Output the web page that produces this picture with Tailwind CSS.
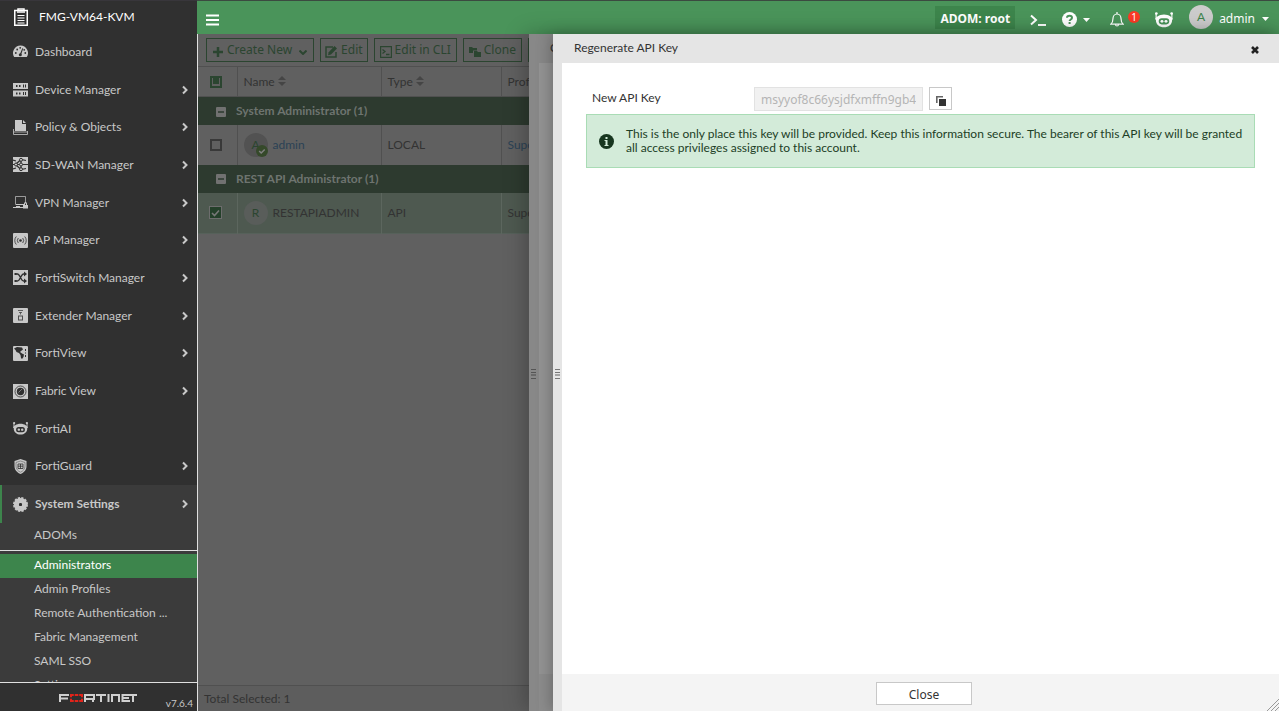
<!DOCTYPE html>
<html lang="en">
<head>
  <meta charset="UTF-8">
  <meta name="viewport" content="width=device-width, initial-scale=1.0">
  <title>FMG-VM64-KVM</title>
  <script src="https://cdn.jsdelivr.net/npm/@tailwindcss/browser@4"></script>
</head>
<body class="h-screen overflow-hidden flex font-['Lato',sans-serif] text-[12px] leading-4 bg-[#606060]">

  <!-- shared icons -->
  <svg class="hidden">
    <symbol id="chevron" viewBox="0 0 6 10"><path d="M1 1.500 4.500 5 1 8.500" fill="none" stroke="currentColor" stroke-width="2"/></symbol>
    <symbol id="sort" viewBox="0 0 8 10"><path d="M0 4 4 0l4 4zM0 6h8l-4 4z" fill="currentColor"/></symbol>
    <symbol id="robot" viewBox="0 0 16 14">
      <path d="M1 1v5M15 1v5" stroke="currentColor" stroke-width="1"/>
      <circle cx="1.200" cy="1.200" r="1.200" fill="currentColor"/><circle cx="14.800" cy="1.200" r="1.200" fill="currentColor"/>
      <path fill="currentColor" fill-rule="evenodd" d="M8 2c4.500 0 7.500 2.500 8 4.500h-.8C15.500 11 12 13.500 8 13.500S.5 11 .8 6.500H0C.5 4.500 3.500 2 8 2zM6 5.500a2.700 2.700 0 0 0 0 5.400h4a2.700 2.700 0 0 0 0-5.400z"/>
      <circle cx="6.200" cy="8.200" r="1.300" fill="currentColor"/><circle cx="9.800" cy="8.200" r="1.300" fill="currentColor"/>
    </symbol>
    <symbol id="grip" viewBox="0 0 5 11"><path d="M0 .5h5M0 3.500h5M0 9.500h5" stroke="currentColor" stroke-width="1"/><path d="M0 6h5" stroke="currentColor" stroke-width="2" stroke-opacity=".6"/></symbol>
  </svg>

  <aside class="w-[197px] shrink-0 flex flex-col bg-[#303030] text-[#c8c8c8] border-t border-[#38363b]">
    <div class="h-8 shrink-0 flex items-center pl-3.5 gap-[11px] text-white">
      <svg class="w-[14px] h-[18px]" viewBox="0 0 14 18" fill="none" stroke="currentColor"><rect x=".75" y="2.500" width="12.500" height="14.750" stroke-width="1.500"/><path d="M4 2.500V1h6v1.500" stroke-width="1.500"/><path d="M3 4h8" stroke-width="1.500"/><path d="M3.500 7.500h7M3.500 10h7M3.500 12.500h7M3.500 15h7"/></svg>
      <span>FMG-VM64-KVM</span>
    </div>

    <nav class="flex-1 min-h-0 overflow-hidden">
      <div class="h-[490px] flex flex-col">
        <a href="#" class="flex-1 flex items-center pl-[13px] pr-[9px]">
          <svg class="size-[15px] mr-[7px]" viewBox="0 0 15 15"><path fill="currentColor" d="M7.500 1.500A7.500 7.500 0 0 0 1.200 13h12.600A7.500 7.500 0 0 0 7.500 1.500z"/><g fill="#303030"><circle cx="2.800" cy="9" r=".9"/><circle cx="4.200" cy="5.500" r=".9"/><circle cx="7.200" cy="3.800" r=".9"/><circle cx="11.200" cy="5.800" r=".9"/><circle cx="12.300" cy="9" r=".9"/><circle cx="7.300" cy="10.700" r="1.500"/><path d="m9.300 4.300-2.500 6.300 1.200.4 2.200-6.500z"/></g></svg>
          <span class="flex-1">Dashboard</span>
        </a>
        <a href="#" class="flex-1 flex items-center pl-[13px] pr-[9px]">
          <svg class="size-[15px] mr-[7px]" viewBox="0 0 15 15"><path fill="currentColor" d="M0 1h15v6H0zM0 8.500h15v6H0z"/><path fill="#303030" d="M3 3h1.500v2H3zM6 3h1.500v2H6zM10 2.500h1v3h-1zM12 2.500h1v3h-1zM3 10.500h1.500v2H3zM6 10.500h1.500v2H6zM10 10h1v3h-1zM12 10h1v3h-1z"/></svg>
          <span class="flex-1">Device Manager</span><svg class="w-1.5 h-2.5"><use href="#chevron"/></svg>
        </a>
        <a href="#" class="flex-1 flex items-center pl-[13px] pr-[9px]">
          <svg class="size-[15px] mr-[7px]" viewBox="0 0 15 15"><path fill="currentColor" d="M2 0h7v4h4v7H2zM10 0l3 3h-3z"/><path d="M.5 9v5.500h14V11M.5 12h14" fill="none" stroke="currentColor" stroke-opacity=".8"/></svg>
          <span class="flex-1">Policy &amp; Objects</span><svg class="w-1.5 h-2.5"><use href="#chevron"/></svg>
        </a>
        <a href="#" class="flex-1 flex items-center pl-[13px] pr-[9px]">
          <svg class="size-[15px] mr-[7px]" viewBox="0 0 15 15"><path fill="currentColor" d="M0 0h15v15H0z"/><path d="M0 7.500h15M2.500 7.500 8 2.500l5 1M2.500 7.500l5.500 5 5-1M8 2.500v10M0 3l3 1M0 12l3-1" fill="none" stroke="#303030" stroke-width="1.200"/><g fill="currentColor" stroke="#303030"><circle cx="3" cy="7.500" r="1.500"/><circle cx="8" cy="2.800" r="1.500"/><circle cx="8" cy="7.500" r="1.500"/><circle cx="8" cy="12.200" r="1.500"/></g></svg>
          <span class="flex-1">SD-WAN Manager</span><svg class="w-1.5 h-2.5"><use href="#chevron"/></svg>
        </a>
        <a href="#" class="flex-1 flex items-center pl-[13px] pr-[9px]">
          <svg class="size-[15px] mr-[7px]" viewBox="0 0 15 15"><path d="M2.500 9V1.500h10V8" fill="none" stroke="currentColor" stroke-opacity=".7"/><path d="M2.500 9.500H11M0 12.500h11" stroke="currentColor"/><path fill="currentColor" d="M3 11h4v2H3zM10 10h1V8.500a1.500 1.500 0 0 1 3 0V10h1v3.500h-5zm2-1.500V10h1V8.500z"/></svg>
          <span class="flex-1">VPN Manager</span><svg class="w-1.5 h-2.5"><use href="#chevron"/></svg>
        </a>
        <a href="#" class="flex-1 flex items-center pl-[13px] pr-[9px]">
          <svg class="size-[15px] mr-[7px]" viewBox="0 0 15 15"><rect width="15" height="15" rx="1" fill="currentColor"/><circle cx="7.500" cy="7.500" r="1.300" fill="#303030"/><path d="M5.300 5a4 4 0 0 0 0 5M9.700 5a4 4 0 0 1 0 5M3.300 3.500a6 6 0 0 0 0 8M11.700 3.500a6 6 0 0 1 0 8" fill="none" stroke="#303030" stroke-opacity=".8"/></svg>
          <span class="flex-1">AP Manager</span><svg class="w-1.5 h-2.5"><use href="#chevron"/></svg>
        </a>
        <a href="#" class="flex-1 flex items-center pl-[13px] pr-[9px]">
          <svg class="size-[15px] mr-[7px]" viewBox="0 0 15 15"><path fill="currentColor" d="M0 0h15v15H0z"/><path d="M2 4h2.500c2.500 0 3.500 7 6 7H12M2 11h2.500c2.500 0 3.500-7 6-7H12" fill="none" stroke="#303030" stroke-width="1.300"/><path fill="#303030" d="m11 1.500 3 2.500-3 2.500zM11 8.500l3 2.500-3 2.500zM1.500 3h2v2h-2zM1.500 10h2v2h-2z"/></svg>
          <span class="flex-1">FortiSwitch Manager</span><svg class="w-1.5 h-2.5"><use href="#chevron"/></svg>
        </a>
        <a href="#" class="flex-1 flex items-center pl-[13px] pr-[9px]">
          <svg class="size-[15px] mr-[7px]" viewBox="0 0 15 15"><rect width="15" height="15" rx="1" fill="currentColor"/><path d="M5 2.500h5M6 4.500h3M7.500 4.500v2" stroke="#303030" stroke-opacity=".7"/><rect x="5.500" y="8" width="4" height="4" fill="none" stroke="#303030" stroke-opacity=".8"/></svg>
          <span class="flex-1">Extender Manager</span><svg class="w-1.5 h-2.5"><use href="#chevron"/></svg>
        </a>
        <a href="#" class="flex-1 flex items-center pl-[13px] pr-[9px]">
          <svg class="size-[15px] mr-[7px]" viewBox="0 0 15 15"><rect width="15" height="15" rx="1" fill="currentColor"/><path fill="#303030" d="M1 2.500 4 1l5 .5 1 2-2 1.500-1 1 2 1.500 2 1-.5 2.500-1.500 2-1-1-.5-3L6 7 3.500 6 2.500 4zM12 3h1v2h-1zM12 6.500h1v1h-1zM12 9h1v2h-1z"/></svg>
          <span class="flex-1">FortiView</span><svg class="w-1.5 h-2.5"><use href="#chevron"/></svg>
        </a>
        <a href="#" class="flex-1 flex items-center pl-[13px] pr-[9px]">
          <svg class="size-[15px] mr-[7px]" viewBox="0 0 15 15"><path fill="currentColor" d="M0 0h15v15H0z"/><circle cx="7.500" cy="7.500" r="5.500" fill="none" stroke="#303030" stroke-opacity=".8"/><circle cx="7.500" cy="7.500" r="3.700" fill="#303030"/><path d="M5.500 8.500 9 5" stroke="currentColor" stroke-opacity=".5"/></svg>
          <span class="flex-1">Fabric View</span><svg class="w-1.5 h-2.5"><use href="#chevron"/></svg>
        </a>
        <a href="#" class="flex-1 flex items-center pl-[13px] pr-[9px]">
          <svg class="size-[15px] mr-[7px]"><use href="#robot"/></svg>
          <span class="flex-1">FortiAI</span>
        </a>
        <a href="#" class="flex-1 flex items-center pl-[13px] pr-[9px]">
          <svg class="size-[15px] mr-[7px]" viewBox="0 0 15 15"><path fill="currentColor" d="M7.500 0 13.500 2v5c0 4-2.500 6.500-6 8-3.500-1.500-6-4-6-8V2z"/><path d="M7.500 2 12 3.500V7c0 3-1.800 5-4.500 6.200C4.800 12 3 10 3 7V3.500z" fill="none" stroke="#303030" stroke-opacity=".5" stroke-width=".8"/><path d="M5 5h5v4.500H5zM7.500 5v4.500M5 7.200h5" fill="none" stroke="#303030" stroke-opacity=".8"/></svg>
          <span class="flex-1">FortiGuard</span><svg class="w-1.5 h-2.5"><use href="#chevron"/></svg>
        </a>
        <a href="#" class="flex-1 flex items-center pl-[11px] pr-[9px] border-l-2 border-[#3d854c] bg-[#3b3b3b] font-bold">
          <svg class="size-[15px] mr-[7px]" viewBox="0 0 15 15"><circle cx="7.500" cy="7.500" r="6.500" fill="none" stroke="currentColor" stroke-width="2" stroke-dasharray="2.200 1.203"/><circle cx="7.500" cy="7.500" r="4.100" fill="none" stroke="currentColor" stroke-width="5"/><circle cx="7.500" cy="7.500" r="1.500" fill="#303030"/></svg>
          <span class="flex-1">System Settings</span><svg class="w-1.5 h-2.5"><use href="#chevron"/></svg>
        </a>
      </div>
      <div class="bg-[#3b3b3b]">
        <a href="#" class="h-[27px] flex items-center pl-[34px] pb-1">ADOMs</a>
        <div class="h-1 border-t border-[#e0e0e0]"></div>
        <a href="#" class="h-6 flex items-center pl-[34px] pb-0.5 bg-[#3d854c] text-white">Administrators</a>
        <a href="#" class="h-6 flex items-center pl-[34px] pb-0.5">Admin Profiles</a>
        <a href="#" class="h-6 flex items-center pl-[34px] pb-0.5">Remote Authentication ...</a>
        <a href="#" class="h-6 flex items-center pl-[34px] pb-0.5">Fabric Management</a>
        <a href="#" class="h-6 flex items-center pl-[34px] pb-0.5">SAML SSO</a>
        <a href="#" class="h-6 flex items-center pl-[34px] pb-0.5">Settings</a>
      </div>
    </nav>

    <div class="h-[29px] shrink-0 border-t border-[#e0e0e0] flex pl-[59px] pr-1">
      <svg class="w-[78px] h-2 mt-[11px]" viewBox="0 0 78 8" fill="none" stroke="#d0d0d0" stroke-width="2">
        <path d="M1 8V1h9M1 4.500h8M26 8V1h9v4h-9M34 5v3M37 1h10M42 1v7M49.500 0v8M53 8V1h7v7M71 1h-7.500v6H71M63.500 4H70M69 1h9M74 1v7"/>
        <path stroke="#e2231a" d="M12 3.200V1h2.800M15.700 1h3.600M20.200 1H23v2.200M12 4.800V7h2.800M15.700 7h3.600M20.200 7H23V4.800"/>
      </svg>
      <span class="ml-auto mt-3 text-[10px]">v7.6.4</span>
    </div>
  </aside>

  <div class="flex-1 min-w-0 flex flex-col relative">
    <header class="h-[34px] shrink-0 border-t border-[#3b4a40] bg-[#4a945a] text-white flex items-center pl-[9px] pr-2.5 font-['Noto_Sans',sans-serif]">
      <button type="button" aria-label="Toggle menu" class="mt-1"><svg class="w-[13px] h-3" viewBox="0 0 13 12" stroke="currentColor" stroke-width="2"><path d="M0 1.500h13M0 6h13M0 10.500h13"/></svg></button>
      <button type="button" class="ml-auto h-[23px] px-[5px] pt-0.5 bg-[#3d854c] font-bold">ADOM: root</button>
      <button type="button" aria-label="CLI console" class="ml-[15px] mt-1"><svg class="w-4 h-3" viewBox="0 0 16 12" fill="none" stroke="currentColor" stroke-width="2"><path d="m1 1.500 5 4.500-5 4.500M8 11h8"/></svg></button>
      <button type="button" aria-label="Help" class="ml-4 mt-1 flex items-center gap-1.5">
        <svg class="size-[15px]" viewBox="0 0 15 15"><circle cx="7.500" cy="7.500" r="7.500" fill="currentColor"/><path d="M5 5.700C5 3 10 3 10 5.700c0 1.800-2.400 1.700-2.400 3.300" fill="none" stroke="#4a945a" stroke-width="2"/><path fill="#4a945a" d="M6.600 10h2v2h-2z"/></svg>
        <svg class="w-[7px] h-1" viewBox="0 0 7 4"><path fill="currentColor" d="M0 0h7L3.500 4z"/></svg>
      </button>
      <button type="button" aria-label="Notifications" class="ml-5 mt-1 flex items-center gap-1">
        <svg class="w-[14px] h-[15px]" viewBox="0 0 14 15" fill="none" stroke="currentColor" stroke-width="1.200"><path d="M.8 12.200c2-1.500 2.200-3 2.200-5.700C3 4 4.700 2 7 2s4 2 4 4.500c0 2.700.2 4.200 2.200 5.700zM7 0v2M5.500 12.500c0 2 3 2 3 0"/></svg>
        <span class="size-3 mb-1.5 rounded-full bg-[#fb3a25] text-[10px] leading-3 text-center">1</span>
      </button>
      <button type="button" aria-label="FortiAI" class="ml-[15px] mt-1"><svg class="w-[18px] h-4"><use href="#robot"/></svg></button>
      <button type="button" class="ml-4 flex items-center">
        <span class="size-6 mb-0.5 rounded-full bg-[#ccc] text-[#3d854c] leading-6 font-['Lato',sans-serif]">A</span>
        <span class="ml-1.5 mt-0.5">admin</span>
        <svg class="ml-[7px] mt-0.5 w-[7px] h-1" viewBox="0 0 7 4"><path fill="currentColor" d="M0 0h7L3.500 4z"/></svg>
      </button>
    </header>

    <main class="flex-1 min-h-0 flex flex-col overflow-hidden border-l border-[#e0e0e0] bg-[#606060] text-[#333]">
      <div class="h-8 shrink-0 flex items-center gap-1.5 pl-2 font-['Noto_Sans',sans-serif] text-[#2b4530]">
        <button type="button" class="h-6 shrink-0 px-1.5 border border-[#2b4530] flex items-center gap-1"><svg class="size-2.5 mt-1" viewBox="0 0 10 10" stroke="currentColor" stroke-width="2.500"><path d="M5 0v10M0 5h10"/></svg>Create New<svg class="ml-[3px] w-2 h-[5px] mt-1" viewBox="0 0 8 5" fill="none" stroke="currentColor" stroke-width="2"><path d="m.5.5 3.500 3.500L7.500.5"/></svg></button>
        <button type="button" class="h-6 shrink-0 px-1 border border-[#2b4530] flex items-center gap-1"><svg class="size-3 mt-1" viewBox="0 0 12 12"><path d="M8 1H1v10h10V6" fill="none" stroke="currentColor" stroke-width="1.500"/><path fill="currentColor" d="M9.500 0 12 2.500 6 8.500l-3 .7.700-3z"/></svg>Edit</button>
        <button type="button" class="h-6 shrink-0 px-[5px] border border-[#2b4530] flex items-center gap-[3px]"><svg class="size-3 mt-1" viewBox="0 0 12 12" fill="none" stroke="currentColor"><path stroke-width="1.200" d="M.6.600h10.800v10.800H.6z"/><path stroke-width="1.300" d="m2.500 3.500 2.500 2-2.500 2M6 8.500h3.500"/></svg>Edit in CLI</button>
        <button type="button" class="h-6 shrink-0 px-[5px] border border-[#2b4530] flex items-center gap-[3px]"><svg class="w-3 h-2.5 mt-1" viewBox="0 0 12 10"><path fill="currentColor" d="M0 0h3l1 1h4v2.500H4V6H0zM5 4h3l1 1h3v5H5z"/></svg>Clone</button>
        <button type="button" aria-label="Delete" class="h-6 w-16 shrink-0 border border-[#2b4530]"></button>
      </div>
      <table class="w-[720px] table-fixed border-collapse text-left">
        <colgroup><col class="w-[39px]"><col class="w-36"><col class="w-[120px]"><col></colgroup>
        <thead>
          <tr class="h-[30px] border-y border-[#505050]">
            <th class="border-r border-[#505050] pl-3"><span class="relative block size-3"><input type="checkbox" aria-label="Select all" class="appearance-none block size-3 border-2 border-[#2b4530]"><span class="absolute left-[3px] top-[2px] size-1.5 bg-[#2b4530]"></span></span></th>
            <th class="border-r border-[#505050] pl-1.5 font-normal">Name <svg class="inline w-2 h-2.5 text-[#454545] mb-0.5"><use href="#sort"/></svg></th>
            <th class="border-r border-[#505050] pl-1.5 font-normal">Type <svg class="inline w-2 h-2.5 text-[#454545] mb-0.5"><use href="#sort"/></svg></th>
            <th class="pl-1.5 font-normal">Prof</th>
          </tr>
        </thead>
        <tbody>
          <tr class="h-7 bg-[#2d3a2f] text-[#6e746f] font-bold">
            <td colspan="4" class="pl-[18px]"><svg class="inline size-2.5 mr-2.5" viewBox="0 0 10 10"><rect width="10" height="10" rx="1" fill="#717171"/><path d="M2 5h6" stroke="#2d3a2f" stroke-width="1.500"/></svg>System Administrator (1)</td>
          </tr>
          <tr class="h-10">
            <td class="border-r border-[#505050] pl-3"><input type="checkbox" aria-label="Select admin" class="appearance-none block size-3 border-2 border-[#393939]"></td>
            <td class="border-r border-[#505050] pl-1.5">
              <div class="flex items-center gap-[5px]">
                <span class="relative size-6 rounded-full bg-[#525252] text-[#2b4530] text-center leading-6">A
                  <svg class="absolute left-3 top-3 size-3" viewBox="0 0 12 12"><circle cx="6" cy="6" r="6" fill="#35492a"/><path d="m3.200 6 2 2 3.500-3.500" fill="none" stroke="#808080" stroke-width="1.500"/></svg>
                </span>
                <a href="#" class="text-[#2b4255]">admin</a>
              </div>
            </td>
            <td class="border-r border-[#505050] pl-1.5">LOCAL</td>
            <td class="pl-1.5"><a href="#" class="text-[#2b4255]">Supe</a></td>
          </tr>
          <tr class="h-7 bg-[#2d3a2f] text-[#6e746f] font-bold">
            <td colspan="4" class="pl-[18px]"><svg class="inline size-2.5 mr-2.5" viewBox="0 0 10 10"><rect width="10" height="10" rx="1" fill="#717171"/><path d="M2 5h6" stroke="#2d3a2f" stroke-width="1.500"/></svg>REST API Administrator (1)</td>
          </tr>
          <tr class="h-[41px] bg-[#4e5950] border-b border-[#56615a]">
            <td class="border-r border-[#5c665e] pl-[11px]"><span class="relative block size-[13px]"><input type="checkbox" checked aria-label="Select RESTAPIADMIN" class="appearance-none block size-[13px] bg-[#24402a] border border-[#6d6d6d]"><svg class="absolute left-0.5 top-[3px] w-[9px] h-2" viewBox="0 0 9 8"><path d="m1 4 2.500 2.500L8 1.500" fill="none" stroke="#777" stroke-width="1.600"/></svg></span></td>
            <td class="border-r border-[#5c665e] pl-1.5">
              <div class="flex items-center gap-[5px]">
                <span class="size-6 rounded-full bg-[#595d5a] text-[#2b4530] text-center leading-6">R</span>
                <span>RESTAPIADMIN</span>
              </div>
            </td>
            <td class="border-r border-[#5c665e] pl-1.5">API</td>
            <td class="pl-1.5">Supe</td>
          </tr>
        </tbody>
      </table>
      <div class="mt-auto h-[26px] shrink-0 border-t border-[#505050] bg-[#5d5d5d] pl-1.5 pt-[5px]">Total Selected: 1</div>
    </main>

    <!-- drawer underneath -->
    <section class="absolute right-0 top-[34px] bottom-0 w-[750px] bg-[#888] text-[#333] shadow-[-4px_0_20px_rgba(0,0,0,0.25)] flex">
      <div class="w-2.5 flex items-center pt-1"><svg class="ml-0.5 w-[5px] h-[11px] text-[#555]"><use href="#grip"/></svg></div>
      <div class="flex-1 flex flex-col">
        <div class="h-[29px] shrink-0 flex items-center pl-[11px] pb-0.5">C</div>
        <div class="flex-1 bg-[#939393]"></div>
        <div class="h-[37px] bg-[#8c8c8c]"></div>
      </div>
    </section>

    <!-- top drawer -->
    <section class="absolute right-0 top-[34px] bottom-0 w-[726px] bg-[#e5e5e5] text-[#333] shadow-[-2px_0_14px_rgba(0,0,0,0.25)] flex">
      <div class="w-[9px] flex items-center pt-1"><svg class="ml-0.5 w-[5px] h-[11px] text-[#777]"><use href="#grip"/></svg></div>
      <div class="flex-1 flex flex-col">
        <div class="h-[29px] shrink-0 flex items-center justify-between pl-3 pr-5 pb-0.5">
          <h1>Regenerate API Key</h1>
          <button type="button" aria-label="Close panel" class="pt-1"><svg class="size-2" viewBox="0 0 8 8" stroke="#222" stroke-width="2.600"><path d="m1 1 6 6M7 1 1 7"/></svg></button>
        </div>
        <div class="flex-1 bg-white px-6 pt-6">
          <div class="flex items-start pl-1.5">
            <label for="apikey" class="w-[162px] leading-[22px]">New API Key</label>
            <input id="apikey" type="text" disabled value="msyyof8c66ysjdfxmffn9gb4" class="w-[169px] h-6 px-1.5 border border-[#e2e2e2] bg-[#f1f1f1] text-[#b5b5b5] font-['Noto_Sans',sans-serif]">
            <button type="button" aria-label="Copy key" class="ml-1.5 size-[23px] border border-[#c8c8c8] bg-white pl-1.5 pt-1"><svg class="size-2.5" viewBox="0 0 10 10"><path d="M7 .8H.8V7" fill="none" stroke="#666" stroke-width="1.600"/><path fill="#333" d="M3 3h7v7H3z"/></svg></button>
          </div>
          <div class="mt-[3px] h-[54px] flex items-center gap-3 pl-3 pr-2 border border-[#a9dcb5] bg-[#d3ebd9] text-[#1c4026] leading-[14px]">
            <svg class="size-[15px] shrink-0" viewBox="0 0 15 15"><circle cx="7.500" cy="7.500" r="7.500" fill="#17361f"/><path fill="#d3ebd9" d="M6.500 3h2v2h-2zM5.500 6h3v5h1v1h-4v-1h1V7h-1z"/></svg>
            <p>This is the only place this key will be provided. Keep this information secure. The bearer of this API key will be granted all access privileges assigned to this account.</p>
          </div>
        </div>
        <div class="relative h-[37px] shrink-0 bg-[#f4f4f4] flex justify-center items-center pl-[7px] pt-0.5">
          <button type="button" class="w-24 h-[23px] pt-0.5 border border-[#c8c8c8] bg-white font-['Noto_Sans',sans-serif]">Close</button>
          <svg class="absolute right-0 bottom-0 size-3" viewBox="0 0 12 12" stroke="#999"><path d="M0 12 12 0M4 12l8-8M8 12l4-4"/></svg>
        </div>
      </div>
    </section>
  </div>
</body>
</html>
